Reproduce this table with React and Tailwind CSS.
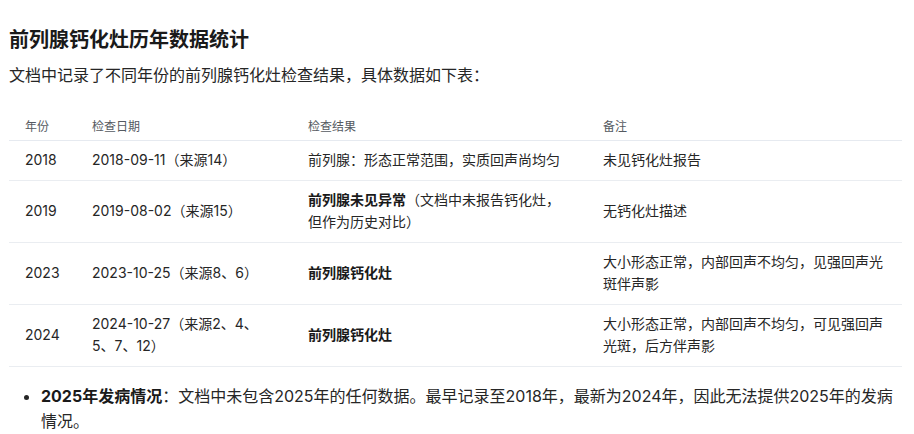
import React from 'react'

const rows = [
    {
        year: '2018',
        date: ['2018-09-11（来源14）'],
        result: <span>前列腺：形态正常范围，实质回声尚均匀</span>,
        note: '未见钙化灶报告'
    },
    {
        year: '2019',
        date: ['2019-08-02（来源15）'],
        result: (
            <span>
                <strong className="font-semibold text-[#1a1a1a]">前列腺未见异常</strong>（文档中未报告钙化灶，<br />但作为历史对比）
            </span>
        ),
        note: '无钙化灶描述'
    },
    {
        year: '2023',
        date: ['2023-10-25（来源8、6）'],
        result: <strong className="font-semibold text-[#1a1a1a]">前列腺钙化灶</strong>,
        note: '大小形态正常，内部回声不均匀，见强回声光斑伴声影'
    },
    {
        year: '2024',
        date: ['2024-10-27（来源2、4、', '5、7、12）'],
        result: <strong className="font-semibold text-[#1a1a1a]">前列腺钙化灶</strong>,
        note: '大小形态正常，内部回声不均匀，可见强回声光斑，后方伴声影'
    }
]

const App = () => {
    return (
        <div
            className="w-[914px] h-[434px] overflow-hidden bg-white px-[9px] pt-[26px] text-[#262626]"
            style={{ fontFamily: '"Inter", "Noto Sans CJK SC", sans-serif' }}
        >
            <h2 className="text-[20px] leading-[28px] font-bold text-[#1a1a1a]">前列腺钙化灶历年数据统计</h2>
            <p className="mt-[9px] text-[16px] leading-[24px]">文档中记录了不同年份的前列腺钙化灶检查结果，具体数据如下表：</p>

            <table className="mt-[23px] w-[893px] table-fixed border-collapse text-[14px]">
                <colgroup>
                    <col className="w-[67px]" />
                    <col className="w-[216px]" />
                    <col className="w-[295px]" />
                    <col className="w-[315px]" />
                </colgroup>
                <thead>
                    <tr className="border-b border-[#e6eaf0] text-left text-[12px] leading-[18px] text-[#555a61]">
                        <th className="pl-4 pr-2 pt-2 pb-[4px] font-normal">年份</th>
                        <th className="pl-4 pr-2 pt-2 pb-[4px] font-normal">检查日期</th>
                        <th className="pl-4 pr-2 pt-2 pb-[4px] font-normal">检查结果</th>
                        <th className="pl-4 pr-2 pt-2 pb-[4px] font-normal">备注</th>
                    </tr>
                </thead>
                <tbody>
                    {rows.map((row) => (
                        <tr key={row.year} className="border-b border-[#eaedf1] leading-[22.5px] align-middle">
                            <td className="pl-4 pr-2 py-2">{row.year}</td>
                            <td className="pl-4 pr-2 py-2">
                                {row.date.map((line, i) => (
                                    <div key={i}>{line}</div>
                                ))}
                            </td>
                            <td className="pl-4 pr-2 py-2">{row.result}</td>
                            <td className="pl-4 pr-4 py-2">{row.note}</td>
                        </tr>
                    ))}
                </tbody>
            </table>

            <ul className="mt-[17px] list-disc pl-[32px] text-[16px] leading-[25px]">
                <li className="pl-0">
                    <strong className="font-bold text-[#1a1a1a]">2025年发病情况</strong>：文档中未包含2025年的任何数据。最早记录至2018年，最新为2024年，因此无法提供2025年的发病情况。
                </li>
            </ul>
        </div>
    )
}

export default App
